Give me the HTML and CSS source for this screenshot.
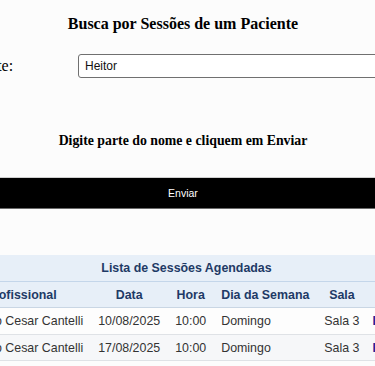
FILE: index.html
```html
<!DOCTYPE html>
<html lang="pt-BR">
<head>
<meta charset="utf-8">
<title>Busca por Sessões de um Paciente</title>
<link rel="stylesheet" href="styles.css">
</head>
<body>
<div class="page">
  <h2 class="title">Busca por Sessões de um Paciente</h2>
  <form class="search">
    <div class="field">
      <label class="label" for="paciente">Paciente:</label>
      <input class="input" id="paciente" type="text" value="Heitor">
    </div>
    <h3 class="hint">Digite parte do nome e cliquem em Enviar</h3>
    <button class="submit" type="button">Enviar</button>
  </form>
  <table class="sessions">
    <thead>
      <tr><th class="caption" colspan="6">Lista de Sessões Agendadas</th></tr>
      <tr class="head">
        <th>Profissional</th>
        <th>Data</th>
        <th>Hora</th>
        <th>Dia da Semana</th>
        <th>Sala</th>
        <th class="act"></th>
      </tr>
    </thead>
    <tbody>
      <tr class="row">
        <td>Ricardo Cesar Cantelli</td>
        <td>10/08/2025</td>
        <td>10:00</td>
        <td>Domingo</td>
        <td>Sala 3</td>
        <td class="act"><a class="action" href="#">Excluir</a></td>
      </tr>
      <tr class="row alt">
        <td>Ricardo Cesar Cantelli</td>
        <td>17/08/2025</td>
        <td>10:00</td>
        <td>Domingo</td>
        <td>Sala 3</td>
        <td class="act"><a class="action" href="#">Excluir</a></td>
      </tr>
    </tbody>
  </table>
</div>
</body>
</html>
```

FILE: styles.css
```css
html, body {
  margin: 0;
  padding: 0;
  background: #fcfcfc;
  overflow: hidden;
  height: 100%;
}

.page {
  width: 366px;
  display: flex;
  flex-direction: column;
  align-items: center;
  font-family: "Liberation Serif", "Times New Roman", serif;
  color: #000;
}

.title {
  margin: 15px 0 0;
  font-size: 16px;
  line-height: 18px;
  font-weight: bold;
  white-space: nowrap;
}

.search {
  display: flex;
  flex-direction: column;
  align-items: center;
  margin: 0;
}

.field {
  margin-top: 21px;
  display: grid;
  grid-template-columns: 123.5px 333.5px;
  align-items: center;
  width: 457px;
}

.label {
  font-size: 16px;
  line-height: 18px;
  white-space: nowrap;
}

.input {
  box-sizing: border-box;
  height: 24px;
  margin: 0;
  padding: 0 6px;
  border: 1px solid #707070;
  border-radius: 3px;
  background: #fff;
  font-family: "Liberation Sans", Arial, sans-serif;
  font-size: 12px;
  color: #111;
  width: 100%;
}

.hint {
  margin: 55px 0 0;
  font-size: 13.8px;
  line-height: 16px;
  font-weight: bold;
  white-space: nowrap;
}

.submit {
  margin-top: 28px;
  width: 460px;
  height: 32px;
  box-sizing: border-box;
  background: #000;
  color: #fff;
  border: 0;
  border-top: 1px solid #cfcfcf;
  border-bottom: 1px solid #6a6a6a;
  font-family: "Liberation Sans", Arial, sans-serif;
  font-size: 10.5px;
  padding: 0;
}

.sessions {
  margin: 46px 0 0 7px;
  border-collapse: collapse;
  font-family: "Liberation Sans", Arial, sans-serif;
  font-size: 12.4px;
  line-height: 14px;
  flex: none;
}

.sessions th,
.sessions td {
  padding: 6px 7.5px 5.5px;
  white-space: nowrap;
}

.sessions .act {
  padding-left: 5.5px;
}

.sessions th {
  color: #1e3a66;
  font-weight: bold;
  text-align: center;
  background: #e7eff8;
}

.caption {
  border-bottom: 1px solid #c4d6ea;
}

.head th {
  border-bottom: 1px solid #c9d6e4;
}

.sessions td {
  text-align: left;
  color: #333;
  border-bottom: 1px solid #dfe2e6;
}

.row td {
  background: #fdfdfd;
}

.row.alt td {
  background: #f6f7f9;
}

.action {
  color: #22229a;
  font-weight: bold;
  text-decoration: none;
}
```
